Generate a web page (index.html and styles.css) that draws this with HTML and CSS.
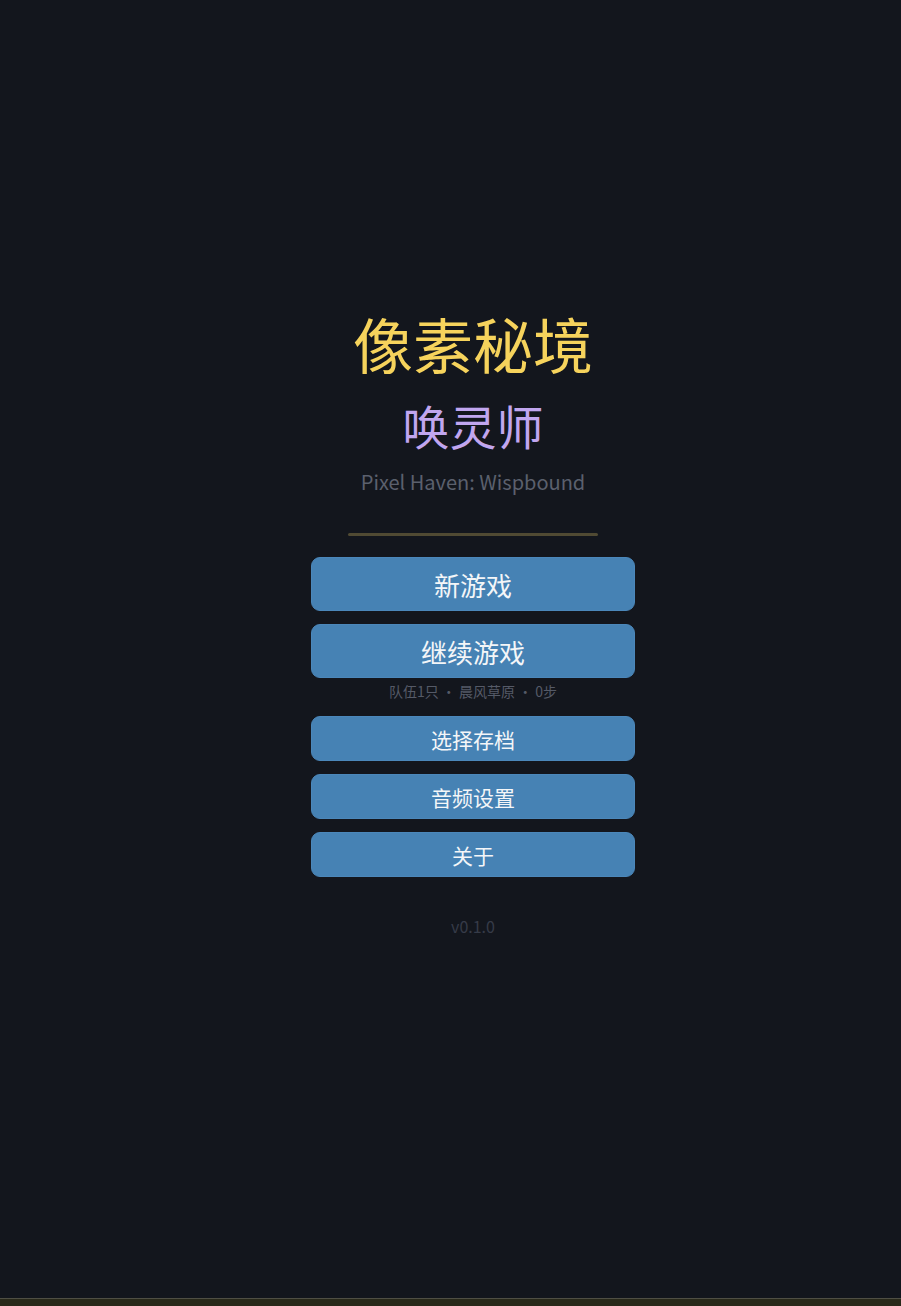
FILE: index.html
```html
<!DOCTYPE html>
<html lang="zh-CN">
<head>
<meta charset="utf-8">
<title>像素秘境 唤灵师</title>
<link rel="stylesheet" href="styles.css">
</head>
<body>
<div class="page">
  <main class="menu">
    <h1 class="title">像素秘境</h1>
    <h2 class="subtitle">唤灵师</h2>
    <p class="english">Pixel Haven: Wispbound</p>
    <div class="divider"></div>
    <div class="buttons">
      <button class="btn btn-large">新游戏</button>
      <button class="btn btn-large">继续游戏</button>
      <p class="save-info">队伍1只 · 晨风草原 · 0步</p>
      <button class="btn btn-small">选择存档</button>
      <button class="btn btn-small">音频设置</button>
      <button class="btn btn-small">关于</button>
    </div>
    <p class="version">v0.1.0</p>
  </main>
  <div class="bottom-strip"></div>
</div>
</body>
</html>
```

FILE: styles.css
```css
* {
  box-sizing: border-box;
}

html, body {
  margin: 0;
  padding: 0;
  background: #13161d;
}

body {
  font-family: "Noto Sans CJK SC", "Noto Sans", sans-serif;
  color: #ffffff;
}

.page {
  min-height: 100vh;
  display: flex;
  flex-direction: column;
}

.menu {
  flex: 1;
  display: flex;
  flex-direction: column;
  align-items: center;
  padding-top: 307px;
  padding-left: 45px;
}

.title {
  margin: 0;
  font-size: 60px;
  line-height: 72px;
  font-weight: 400;
  color: #f6d35c;
}

.subtitle {
  margin: 18px 0 0;
  font-size: 47px;
  line-height: 56px;
  font-weight: 400;
  color: #c1a6ef;
}

.english {
  margin: 15px 0 0;
  font-size: 20px;
  line-height: 28px;
  color: #5b606d;
}

.divider {
  margin-top: 37px;
  width: 250px;
  height: 3px;
  background: #504a33;
  border-radius: 2px;
}

.buttons {
  margin-top: 21px;
  display: flex;
  flex-direction: column;
  align-items: center;
}

.btn {
  width: 324px;
  border: 1px solid #4b87ba;
  border-radius: 9px;
  background: #4682b4;
  color: #f4f6f8;
  font-family: "Noto Sans CJK SC", "Noto Sans", sans-serif;
  font-weight: 400;
  padding: 0;
  cursor: pointer;
}

.btn-large {
  height: 54px;
  font-size: 26px;
}

.btn + .btn {
  margin-top: 13px;
}

.btn-small {
  height: 45px;
  font-size: 21px;
}

.save-info {
  margin: 3px 0 15px;
  font-size: 14px;
  line-height: 20px;
  color: #555a67;
}

.version {
  margin: 37px 0 0;
  font-size: 16px;
  line-height: 24px;
  color: #363b48;
}

.bottom-strip {
  height: 8px;
  background: #29291a;
  border-top: 1px solid #4f4f44;
}
```
